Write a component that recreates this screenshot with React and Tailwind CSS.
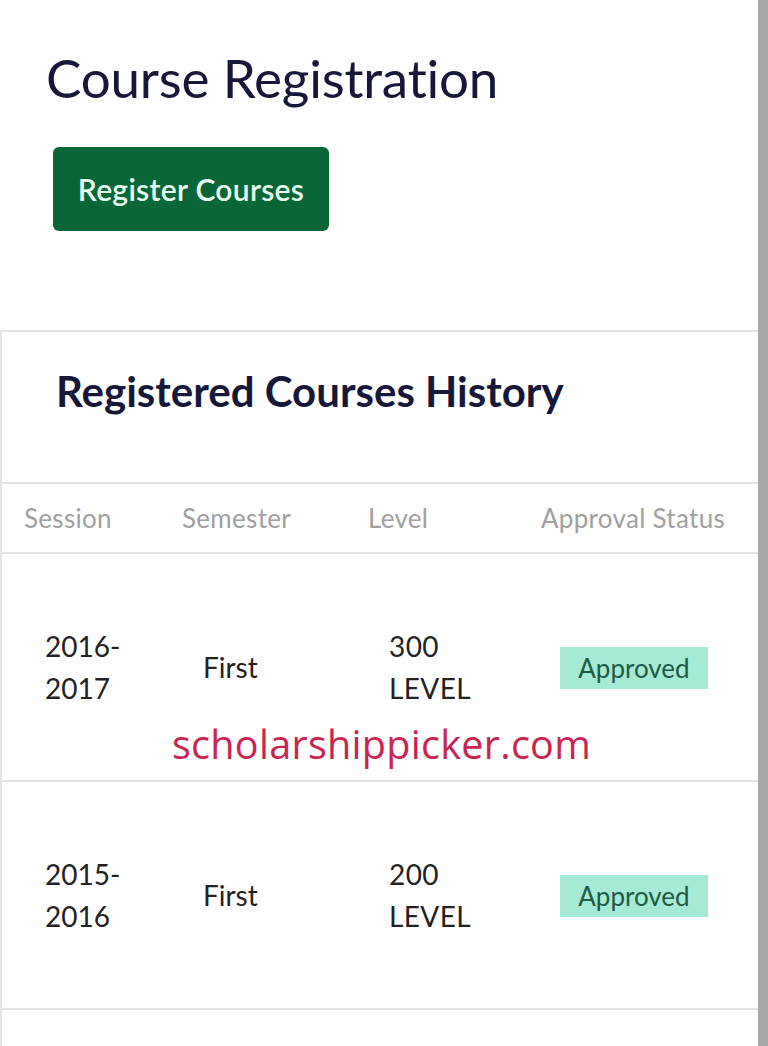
import React from "react";

const rows = [
  { session: ["2016-", "2017"], semester: "First", level: ["300", "LEVEL"], status: "Approved" },
  { session: ["2015-", "2016"], semester: "First", level: ["200", "LEVEL"], status: "Approved" },
];

const cols = "grid grid-cols-[158px_186px_173px_1fr]";

export default function App() {
  return (
    <div
      className="relative flex min-h-[1046px] w-[768px] bg-white"
      style={{ fontFamily: "Lato, 'Liberation Sans', sans-serif" }}
    >
      <div className="w-[758px] flex flex-col">
        {/* Page header */}
        <div className="h-[330px] pl-[46px] pt-[46px]">
          <h1 className="text-[53px] leading-[64px] font-normal text-[#17173a] tracking-[-0.2px]">
            Course Registration
          </h1>
          <button className="mt-[37px] ml-[7px] h-[84px] w-[276px] rounded-[6px] bg-[#0b6637] text-[30px] font-semibold text-[#e8fff4] tracking-[0.3px]">
            Register Courses
          </button>
        </div>

        {/* History card */}
        <div className="border-t-2 border-l-2 border-[#e4e4e4] flex-1">
          <div className="h-[150px] flex items-center pl-[54px] pb-[32px]">
            <h2 className="text-[42px] font-bold text-[#17173a] tracking-[0px]">
              Registered Courses History
            </h2>
          </div>

          <div className={cols + " h-[72px] items-center border-t-2 border-b-2 border-[#e4e4e4] px-[22px] text-[26px] text-[#a0a0a0] tracking-[0.3px]"}>
            <div>Session</div>
            <div>Semester</div>
            <div>Level</div>
            <div>Approval Status</div>
          </div>

          {rows.map((r, i) => (
            <div
              key={i}
              className={cols + " h-[228px] items-center border-b-2 border-[#e4e4e4] px-[22px] text-[28px] leading-[42px] text-[#222]"}
            >
              <div className="pl-[21px]">
                {r.session[0]}
                <br />
                {r.session[1]}
              </div>
              <div className="pl-[21px]">{r.semester}</div>
              <div className="pl-[21px] tracking-[0.4px]">
                {r.level[0]}
                <br />
                {r.level[1]}
              </div>
              <div className="pl-[19px]">
                <span className="inline-flex h-[42px] w-[148px] items-center justify-center bg-[#a6ead6] text-[26px] text-[#1e5a45]">
                  {r.status}
                </span>
              </div>
            </div>
          ))}
        </div>
      </div>

      {/* right scroll strip */}
      <div className="w-[10px] bg-[#a9a9a9]" />

      {/* watermark */}
      <div
        className="absolute left-[172px] top-[721px] text-[39.5px] leading-[46px] text-[#cc2450] tracking-[0.3px]"
        style={{ fontFamily: "'Open Sans', sans-serif" }}
      >
        scholarshippicker.com
      </div>
    </div>
  );
}
